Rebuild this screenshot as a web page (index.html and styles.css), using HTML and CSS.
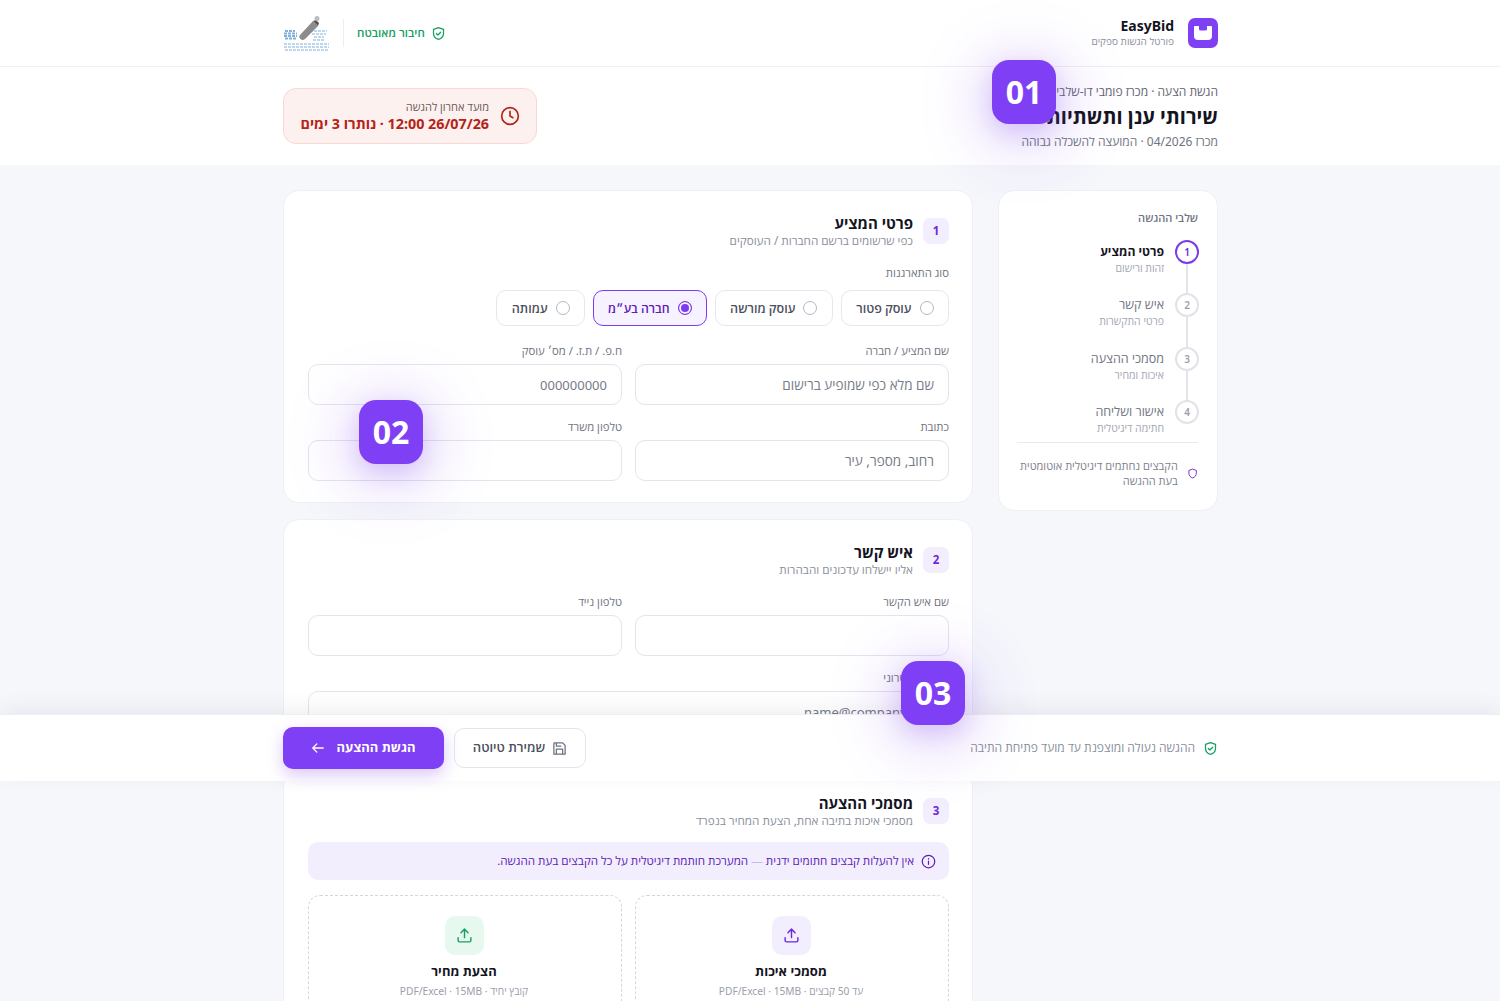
FILE: index.html
```html
<!DOCTYPE html>
<html lang="he" dir="rtl">
<head>
  <meta charset="UTF-8" />
  <meta name="viewport" content="width=device-width, initial-scale=1.0" />
  <title>EasyBid - הגשת הצעה</title>
  <link rel="stylesheet" href="styles.css">
</head>
<body>
  <header class="topbar">
    <div class="wrap topbar-row">
      <div class="brand">
        <div class="brand-mark">
          <svg width="20" height="16" viewBox="0 0 20 16"><path d="M2 1h4v3a1.5 1.5 0 0 0 1.5 1.5h5A1.5 1.5 0 0 0 14 4V1h4a1 1 0 0 1 1 1v9a4 4 0 0 1-4 4H5a4 4 0 0 1-4-4V2a1 1 0 0 1 1-1z" fill="#fff"/></svg>
        </div>
        <div class="brand-text">
          <div class="brand-name">EasyBid</div>
          <div class="brand-sub">פורטל הגשות ספקים</div>
        </div>
      </div>
      <div class="secure">
        <svg width="15" height="15" viewBox="0 0 24 24" fill="none" stroke="#16a062" stroke-width="2" stroke-linecap="round" stroke-linejoin="round"><path d="M12 2.500l8 3v6c0 5-3.400 8.600-8 10-4.600-1.400-8-5-8-10v-6z"/><path d="M8.500 12l2.500 2.500 4.500-4.500"/></svg>
        <span>חיבור מאובטח</span>
        <i class="secure-sep"></i>
        <svg class="org-logo" width="47" height="36" viewBox="0 0 47 36">
          <g stroke="#4d8fcb" stroke-width="1.200" stroke-dasharray="3 1" fill="none" opacity=".7">
            <path d="M27 16h17M29 19h14M31 22h10M30 25h12"/>
            <path d="M2 16h10M1 18.500h13M1 21h13M2 23.500h11" stroke-width="1.800"/>
            <path d="M1 29h45M1 32h45M2 35h43"/>
          </g>
          <path d="M17 20L30 6l5 5-13 13c-2 1.500-4 1-5-.5s-1-2.500 0-3.500z" fill="#8c8c8c"/>
          <path d="M30 6l5 5 1-3-3-3z" fill="#555"/>
          <circle cx="34" cy="3.500" r="2.500" fill="#bbb"/>
        </svg>
      </div>
    </div>
  </header>

  <section class="subhead">
    <div class="wrap subhead-row">
      <div class="subhead-text">
        <div class="crumb">הגשת הצעה · מכרז פומבי דו-שלבי</div>
        <h1>שירותי ענן ותשתיות</h1>
        <div class="tender">מכרז 04/2026 · המועצה להשכלה גבוהה</div>
      </div>
      <div class="deadline">
        <svg width="20" height="20" viewBox="0 0 24 24" fill="none" stroke="#b42318" stroke-width="2" stroke-linecap="round" stroke-linejoin="round"><circle cx="12" cy="12" r="10"/><path d="M12 6.500V12l3.500 2"/></svg>
        <div>
          <div class="deadline-label">מועד אחרון להגשה</div>
          <div class="deadline-value">26/07/26 12:00 · נותרו 3 ימים</div>
        </div>
      </div>
    </div>
  </section>

  <div class="wrap layout">
    <aside class="steps card">
      <div class="steps-title">שלבי ההגשה</div>
      <ol class="step-list">
        <li class="step active">
          <span class="step-num">1</span>
          <div class="step-text"><div class="step-name">פרטי המציע</div><div class="step-sub">זהות ורישום</div></div>
        </li>
        <li class="step">
          <span class="step-num">2</span>
          <div class="step-text"><div class="step-name">איש קשר</div><div class="step-sub">פרטי התקשרות</div></div>
        </li>
        <li class="step">
          <span class="step-num">3</span>
          <div class="step-text"><div class="step-name">מסמכי ההצעה</div><div class="step-sub">איכות ומחיר</div></div>
        </li>
        <li class="step">
          <span class="step-num">4</span>
          <div class="step-text"><div class="step-name">אישור ושליחה</div><div class="step-sub">חתימה דיגיטלית</div></div>
        </li>
      </ol>
      <div class="steps-note">
        <svg width="15" height="15" viewBox="0 0 24 24" fill="none" stroke="#6d28d9" stroke-width="2" stroke-linejoin="round"><path d="M12 2.500l8 3v6c0 5-3.400 8.600-8 10-4.600-1.400-8-5-8-10v-6z"/></svg>
        <p>הקבצים נחתמים דיגיטלית אוטומטית בעת ההגשה</p>
      </div>
    </aside>

    <main class="forms">
      <section class="card section">
        <div class="section-head">
          <span class="section-num">1</span>
          <div><h2>פרטי המציע</h2><div class="section-sub">כפי שרשומים ברשם החברות / העוסקים</div></div>
        </div>
        <div class="field-label type-label">סוג התארגנות</div>
        <div class="radios">
          <div class="radio"><i></i>עוסק פטור</div>
          <div class="radio"><i></i>עוסק מורשה</div>
          <div class="radio selected"><i></i>חברה בע״מ</div>
          <div class="radio"><i></i>עמותה</div>
        </div>
        <div class="fields">
          <div><div class="field-label">שם המציע / חברה</div><div class="input">שם מלא כפי שמופיע ברישום</div></div>
          <div><div class="field-label">ח.פ. / ת.ז. / מס׳ עוסק</div><div class="input latin">000000000</div></div>
          <div><div class="field-label">כתובת</div><div class="input">רחוב, מספר, עיר</div></div>
          <div><div class="field-label">טלפון משרד</div><div class="input"></div></div>
        </div>
      </section>

      <section class="card section">
        <div class="section-head">
          <span class="section-num">2</span>
          <div><h2>איש קשר</h2><div class="section-sub">אליו יישלחו עדכונים והבהרות</div></div>
        </div>
        <div class="fields">
          <div><div class="field-label">שם איש הקשר</div><div class="input"></div></div>
          <div><div class="field-label">טלפון נייד</div><div class="input"></div></div>
          <div class="full"><div class="field-label">דואר אלקטרוני</div><div class="input latin">name@company.co.il</div></div>
        </div>
      </section>

      <section class="card section">
        <div class="section-head">
          <span class="section-num">3</span>
          <div><h2>מסמכי ההצעה</h2><div class="section-sub">מסמכי איכות בתיבה אחת, הצעת המחיר בנפרד</div></div>
        </div>
        <div class="info">
          <svg width="15" height="15" viewBox="0 0 24 24" fill="none" stroke="#5b21b6" stroke-width="2" stroke-linecap="round"><circle cx="12" cy="12" r="10"/><path d="M12 11.500v5M12 7.500v.5"/></svg>
          <span>אין להעלות קבצים חתומים ידנית <span class="dash">—</span> המערכת חותמת דיגיטלית על כל הקבצים בעת ההגשה.</span>
        </div>
        <div class="uploads">
          <div class="upload">
            <span class="upload-icon">
              <svg width="17" height="17" viewBox="0 0 24 24" fill="none" stroke="#6d28d9" stroke-width="2" stroke-linecap="round" stroke-linejoin="round"><path d="M3 15v4a2 2 0 0 0 2 2h14a2 2 0 0 0 2-2v-4"/><path d="M12 15V3M7 8l5-5 5 5"/></svg>
            </span>
            <div class="upload-name">מסמכי איכות</div>
            <div class="upload-sub">עד 50 קבצים · PDF/Excel · 15MB</div>
          </div>
          <div class="upload">
            <span class="upload-icon green">
              <svg width="17" height="17" viewBox="0 0 24 24" fill="none" stroke="#16a062" stroke-width="2" stroke-linecap="round" stroke-linejoin="round"><path d="M3 15v4a2 2 0 0 0 2 2h14a2 2 0 0 0 2-2v-4"/><path d="M12 15V3M7 8l5-5 5 5"/></svg>
            </span>
            <div class="upload-name">הצעת מחיר</div>
            <div class="upload-sub">קובץ יחיד · PDF/Excel · 15MB</div>
          </div>
        </div>
      </section>
    </main>
  </div>

  <div class="actionbar">
    <div class="wrap actionbar-row">
      <div class="action-note">
        <svg width="15" height="15" viewBox="0 0 24 24" fill="none" stroke="#16a062" stroke-width="2" stroke-linecap="round" stroke-linejoin="round"><path d="M12 2.500l8 3v6c0 5-3.400 8.600-8 10-4.600-1.400-8-5-8-10v-6z"/><path d="M8.500 12l2.500 2.500 4.500-4.500"/></svg>
        <span>ההגשה נעולה ומוצפנת עד מועד פתיחת התיבה</span>
      </div>
      <div class="actions">
        <button class="btn-draft">
          <svg width="15" height="15" viewBox="0 0 24 24" fill="none" stroke="#6b7280" stroke-width="2" stroke-linejoin="round"><path d="M4 3h13l4 4v14H3V4a1 1 0 0 1 1-1z"/><path d="M7 21v-8h10v8M7 3v5h8"/></svg>
          שמירת טיוטה
        </button>
        <button class="btn-submit">
          הגשת ההצעה
          <svg width="14" height="14" viewBox="0 0 24 24" fill="none" stroke="#fff" stroke-width="2.200" stroke-linecap="round" stroke-linejoin="round"><path d="M21 12H3M10 5l-7 7 7 7"/></svg>
        </button>
      </div>
    </div>
  </div>

  <div class="callout callout-1">01</div>
  <div class="callout callout-2">02</div>
  <div class="callout callout-3">03</div>
</body>
</html>
```

FILE: styles.css
```css
* {
  box-sizing: border-box;
}
html, body {
  margin: 0;
  height: 1001px;
  overflow: hidden;
}
body {
  position: relative;
  background: #f5f7fb;
  color: #14141f;
  font-family: "Noto Sans", "Open Sans", sans-serif;
}
.wrap {
  width: 935px;
  margin-right: 282px;
}

/* top bar */
.topbar {
  height: 67px;
  background: #fff;
  border-bottom: 1px solid #eef0f4;
}
.topbar-row {
  height: 66px;
  display: flex;
  align-items: center;
  justify-content: space-between;
}
.brand {
  display: flex;
  align-items: center;
  gap: 14px;
}
.brand-mark {
  width: 30px;
  height: 30px;
  border-radius: 7px;
  background: #7f3ff2;
  display: flex;
  align-items: center;
  justify-content: center;
}
.brand-name {
  font-size: 14px;
  font-weight: 700;
  line-height: 17px;
  margin-top: -1px;
  text-align: right;
}
.brand-sub {
  font-size: 10px;
  line-height: 13px;
  margin-top: 1px;
  color: #8a8f9c;
}
.secure {
  display: flex;
  align-items: center;
  gap: 6px;
  font-size: 11.500px;
  font-weight: 600;
  color: #16a062;
}
.secure span {
  padding-bottom: 1px;
}
.secure-sep {
  width: 1px;
  height: 28px;
  background: #eceef3;
  margin: 0 7px;
}

/* tender heading */
.subhead {
  height: 98px;
  background: #fff;
}
.subhead-row {
  height: 98px;
  display: flex;
  justify-content: space-between;
  align-items: center;
}
.subhead-text {
  padding-top: 2px;
}
.crumb, .tender {
  font-size: 12px;
  line-height: 16px;
  color: #6f7482;
}
.crumb {
  color: #5f6472;
}
h1 {
  margin: 2px 0 2px;
  font-size: 20px;
  line-height: 30px;
  font-weight: 700;
}
.deadline {
  width: 254px;
  height: 56px;
  padding: 0 16px 0 8px;
  display: flex;
  align-items: center;
  gap: 11px;
  background: #fdf1ef;
  border: 1px solid #f8d9d4;
  border-radius: 13px;
}
.deadline-label {
  font-size: 11px;
  line-height: 15px;
  color: #6f5a58;
}
.deadline-value {
  font-size: 14.300px;
  line-height: 20px;
  font-weight: 700;
  color: #b42318;
  white-space: nowrap;
}

/* page columns */
.layout {
  display: flex;
  align-items: flex-start;
  gap: 25px;
  padding-top: 25px;
}
.card {
  background: #fff;
  border: 1px solid #eef0f5;
  border-radius: 16px;
}

/* steps sidebar */
.steps {
  width: 220px;
  height: 321px;
  flex: none;
  padding: 20px 19px 0 18px;
}
.steps-title {
  font-size: 11px;
  line-height: 13px;
  font-weight: 600;
  color: #6f7482;
}
.step-list {
  list-style: none;
  margin: 16px -1px 0 0;
  padding: 0;
}
.step {
  position: relative;
  height: 53.300px;
  display: flex;
  gap: 11px;
  color: #6f7482;
}
.step:not(:last-child)::after {
  content: "";
  position: absolute;
  top: 24px;
  right: 11px;
  width: 2px;
  height: 30px;
  background: #e4e5ea;
}
.step-num {
  width: 24px;
  height: 24px;
  flex: none;
  border: 2px solid #e2e3e9;
  border-radius: 50%;
  font-size: 10px;
  font-weight: 600;
  line-height: 20px;
  text-align: center;
  color: #9a9eb0;
}
.step-text {
  padding-top: 3px;
}
.step-name {
  font-size: 12.500px;
  line-height: 17px;
}
.step-sub {
  font-size: 10.500px;
  line-height: 17px;
  color: #a3a7b3;
}
.step.active .step-num {
  border-color: #7c3aed;
  color: #6d28d9;
}
.step.active .step-name {
  font-size: 12.200px;
  font-weight: 700;
  color: #14141f;
}
.steps-note {
  margin-top: -11px;
  padding-top: 15px;
  border-top: 1px solid #e9eaef;
  display: flex;
  align-items: center;
  gap: 9px;
}
.steps-note p {
  margin: 0;
  font-size: 11px;
  line-height: 15px;
  color: #7c8190;
}

/* form sections */
.forms {
  width: 690px;
  flex: none;
  display: flex;
  flex-direction: column;
  gap: 16px;
}
.section {
  padding: 27px 23px 21px 24px;
}
.section-head {
  display: flex;
  gap: 10px;
  align-items: flex-start;
  height: 48px;
}
.section-num {
  width: 26px;
  height: 26px;
  flex: none;
  background: #f3eefe;
  border-radius: 7px;
  font-size: 11.500px;
  font-weight: 700;
  line-height: 26px;
  text-align: center;
  color: #6d28d9;
}
h2 {
  margin: -4px 0 0;
  font-size: 15px;
  line-height: 18px;
  font-weight: 700;
}
.section-sub {
  font-size: 11.700px;
  line-height: 16px;
  color: #8a8f9c;
}
.field-label {
  font-size: 11.300px;
  line-height: 13px;
  color: #6f7482;
  margin-bottom: 7px;
}
.type-label {
  margin-bottom: 11px;
}
.radios {
  display: flex;
  gap: 8px;
  margin-bottom: 18px;
}
.radio {
  height: 36px;
  padding: 0 14.500px;
  display: flex;
  align-items: center;
  gap: 8px;
  background: #fff;
  border: 1px solid #e6e7ee;
  border-radius: 10px;
  font-size: 12.500px;
  font-weight: 600;
  color: #4c5060;
}
.radio i {
  width: 14px;
  height: 14px;
  border: 1.500px solid #b4b7c2;
  border-radius: 50%;
}
.radio.selected {
  padding: 0 14px;
  background: #f6f2ff;
  border-color: #7c3aed;
  font-size: 12.200px;
  color: #5b21b6;
}
.radio.selected i {
  border-color: #7c3aed;
  background: #7c3aed;
  box-shadow: inset 0 0 0 2px #f6f2ff;
}
.fields {
  display: grid;
  grid-template-columns: 1fr 1fr;
  gap: 15px 13px;
}
.fields .full {
  grid-column: 1 / -1;
}
.input {
  height: 41px;
  padding: 0 14px;
  background: #fff;
  border: 1px solid #e4e4ee;
  border-radius: 10px;
  font-size: 13.500px;
  line-height: 41px;
  color: #777b88;
}
.input.latin {
  font-size: 13px;
}
.info {
  height: 38px;
  margin-top: -4px;
  padding: 0 13px 0 14px;
  display: flex;
  align-items: center;
  gap: 7px;
  background: #f3eefe;
  border-radius: 10px;
  font-size: 11.600px;
  color: #5b21b6;
}
.info > span {
  padding-bottom: 2px;
}
.dash {
  color: #c9b8ee;
}
.uploads {
  display: grid;
  grid-template-columns: 1fr 1fr;
  gap: 13px;
  margin-top: 15px;
}
.upload {
  height: 150px;
  padding: 20px 2px 0 0;
  border: 1px dashed #d5d6dd;
  border-radius: 12px;
  text-align: center;
}
.upload-icon {
  width: 39px;
  height: 39px;
  display: flex;
  align-items: center;
  justify-content: center;
  margin: 0 auto 6px;
  background: #f3eefe;
  border-radius: 10px;
}
.upload-icon.green {
  background: #e7f8ef;
}
.upload-name {
  font-size: 13px;
  line-height: 20px;
  font-weight: 700;
}
.upload-sub {
  font-size: 10.200px;
  line-height: 20px;
  color: #9a9eab;
}

/* action bar that stays over the form */
.actionbar {
  position: absolute;
  top: 714px;
  left: 0;
  right: 0;
  height: 67px;
  background: #fff;
  border-top: 1px solid #eceef3;
  box-shadow: 0 -6px 20px rgba(20, 20, 40, 0.06);
}
.actionbar-row {
  height: 66px;
  display: flex;
  align-items: center;
  justify-content: space-between;
}
.action-note {
  display: flex;
  align-items: center;
  gap: 8px;
  font-size: 12px;
  color: #8a8f9c;
}
.action-note span {
  padding-bottom: 2px;
}
.actions {
  display: flex;
  align-items: center;
  gap: 10px;
}
.actions button {
  display: flex;
  align-items: center;
  justify-content: center;
  padding: 0 0 2px;
  font-family: inherit;
  font-size: 13px;
  cursor: pointer;
}
.actions svg {
  margin-top: 2px;
}
.btn-draft {
  width: 132px;
  height: 40px;
  gap: 7px;
  background: #fff;
  border: 1px solid #e4e5ea;
  border-radius: 10px;
  font-weight: 600;
  color: #4c5060;
}
.btn-submit {
  width: 161px;
  height: 42px;
  gap: 11px;
  background: #7f3ff5;
  border: none;
  border-radius: 10px;
  font-weight: 700;
  color: #fff;
  box-shadow: 0 6px 16px rgba(124, 58, 237, 0.28);
}

/* numbered markers over the page */
.callout {
  position: absolute;
  width: 64px;
  height: 64px;
  padding-bottom: 2px;
  display: flex;
  align-items: center;
  justify-content: center;
  background: #7f3ff5;
  border-radius: 17px;
  font-size: 32px;
  font-weight: 700;
  color: #fff;
  box-shadow: 0 8px 24px rgba(124, 58, 237, 0.22), 0 10px 64px 12px rgba(124, 58, 237, 0.2);
}
.callout-1 { left: 992px; top: 60px; }
.callout-2 { left: 359px; top: 400px; }
.callout-3 { left: 901px; top: 661px; }
```
